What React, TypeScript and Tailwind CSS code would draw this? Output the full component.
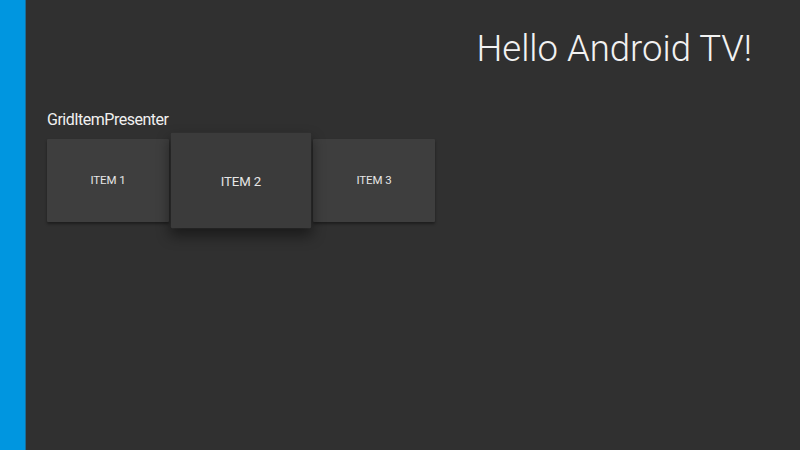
import React from "react";

const items = ["ITEM 1", "ITEM 2", "ITEM 3"];

const GridItem = ({ label, selected }: { label: string; selected: boolean }) => {
  return (
    <div
      className={`w-[122px] h-[83px] flex items-center justify-center pt-[2px] rounded-[1px] ${
        selected
          ? "bg-[#3b3b3b] scale-[1.15] z-10 shadow-[0_6px_12px_rgba(0,0,0,0.45)]"
          : "bg-[#3e3e3e] shadow-[0_2px_3px_rgba(0,0,0,0.4)]"
      }`}
    >
      <span className="text-[11.5px] text-[#e6e6e6] tracking-[-0.1px]">{label}</span>
    </div>
  );
};

export default function App() {
  return (
    <div
      className="w-[800px] h-[450px] flex bg-[#303030] overflow-hidden"
      style={{ fontFamily: "Roboto, 'Liberation Sans', sans-serif" }}
    >
      {/* headers dock */}
      <div className="w-[26px] h-full bg-[#0096e0] border-r border-[#1a6c98]" />

      <div className="flex-1 flex flex-col pl-[21px] pr-[48px]">
        <div className="flex justify-end mt-[31px]">
          <h1 className="text-[36.5px] leading-none font-light text-[#f2f2f2]">Hello Android TV!</h1>
        </div>

        <div className="mt-[44px]">
          <h2 className="text-[16px] leading-none tracking-[-0.5px] text-[#f0f0f0]">GridItemPresenter</h2>
          <div className="flex gap-[11px] mt-[11px]">
            {items.map((item, i) => (
              <GridItem key={item} label={item} selected={i === 1} />
            ))}
          </div>
        </div>
      </div>
    </div>
  );
}
